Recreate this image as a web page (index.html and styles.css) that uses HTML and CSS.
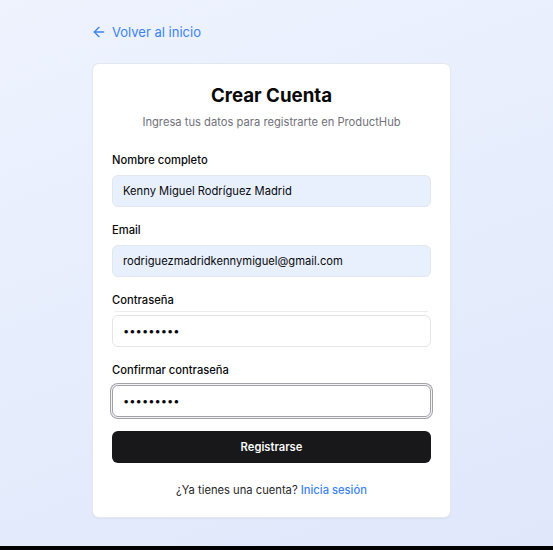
FILE: index.html
```html
<!DOCTYPE html>
<html lang="es">
<head>
<meta charset="utf-8">
<title>Crear Cuenta</title>
<link rel="stylesheet" href="styles.css">
</head>
<body>
<div class="page">
  <div class="wrap">
    <a class="back" href="#">
      <svg class="back-icon" width="16" height="16" viewBox="0 0 24 24" fill="none" stroke="currentColor" stroke-width="2" stroke-linecap="round" stroke-linejoin="round"><path d="m12 19-7-7 7-7"/><path d="M19 12H5"/></svg>
      <span>Volver al inicio</span>
    </a>
    <div class="card">
      <div class="head">
        <h1 class="title">Crear Cuenta</h1>
        <p class="subtitle">Ingresa tus datos para registrarte en ProductHub</p>
      </div>
      <form class="form">
        <div class="field">
          <label class="label">Nombre completo</label>
          <input class="input autofill" type="text" value="Kenny Miguel Rodríguez Madrid">
        </div>
        <div class="field">
          <label class="label">Email</label>
          <input class="input autofill" type="email" value="rodriguezmadridkennymiguel@gmail.com">
        </div>
        <div class="field field-line">
          <label class="label">Contraseña</label>
          <input class="input" type="password" value="123456789">
        </div>
        <div class="field">
          <label class="label">Confirmar contraseña</label>
          <input class="input focus" type="password" value="123456789">
        </div>
        <button class="btn" type="button">Registrarse</button>
      </form>
      <p class="foot">¿Ya tienes una cuenta? <a class="foot-link" href="#">Inicia sesión</a></p>
    </div>
  </div>
</div>
</body>
</html>
```
FILE: styles.css
```css
html {
  background: #000;
  margin: 0;
}
body {
  margin: 0;
  font-family: Inter, "Liberation Sans", sans-serif;
  color: #09090b;
}
.page {
  height: 546px;
  background: linear-gradient(160deg, #eef3fe 0%, #e6edfc 50%, #e0e7fb 100%);
  display: flex;
  justify-content: center;
  padding-right: 10px;
  box-sizing: border-box;
  padding-top: 22px;
}
.wrap {
  width: 359px;
}
.back {
  display: flex;
  align-items: center;
  gap: 5px;
  height: 20px;
  font-size: 13px;
  color: #3b82f6;
  text-decoration: none;
  margin-left: -1px;
  margin-bottom: 21px;
}
.back-icon {
  display: block;
}
.card {
  background: #fff;
  border: 1px solid #e4e7ee;
  border-radius: 7px;
  padding: 18px 19px 19px;
  box-shadow: 0 1px 2px rgba(0, 0, 0, 0.04);
}
.head {
  text-align: center;
  margin-bottom: 21px;
}
.title {
  margin: 0;
  font-size: 18.7px;
  line-height: 28px;
  font-weight: 700;
  color: #09090b;
}
.subtitle {
  margin: 4px 0 0;
  font-size: 11.2px;
  line-height: 16px;
  color: #71717a;
}
.form {
  display: flex;
  flex-direction: column;
  gap: 14px;
}
.field {
  display: flex;
  flex-direction: column;
  gap: 6px;
  position: relative;
}
.field-line::after {
  content: "";
  position: absolute;
  left: 3px;
  right: 3px;
  top: 20px;
  height: 1px;
  background: #eeeef1;
}
.label {
  font-size: 11.2px;
  line-height: 18px;
  font-weight: 500;
  color: #09090b;
}
.input {
  box-sizing: border-box;
  height: 32px;
  width: 100%;
  border: 1px solid #e4e4e7;
  border-radius: 6px;
  padding: 0 10px;
  font-family: inherit;
  font-size: 11.2px;
  color: #09090b;
  background: #fff;
  outline: none;
}
.input.autofill {
  background: #e8f0fe;
  border-color: #e1e6ef;
}
.input.focus {
  border-color: #a1a1aa;
  box-shadow: 0 0 0 1px #f4f4f5, 0 0 0 2px #a1a1aa;
}
.btn {
  height: 32px;
  border: none;
  border-radius: 6px;
  background: #18181b;
  color: #fafafa;
  font-family: inherit;
  font-size: 11.2px;
  font-weight: 600;
}
.foot {
  margin: 19px 0 0;
  text-align: center;
  font-size: 11.2px;
  line-height: 16px;
  color: #27272a;
}
.foot-link {
  color: #3b82f6;
  font-weight: 500;
  text-decoration: none;
}
```
